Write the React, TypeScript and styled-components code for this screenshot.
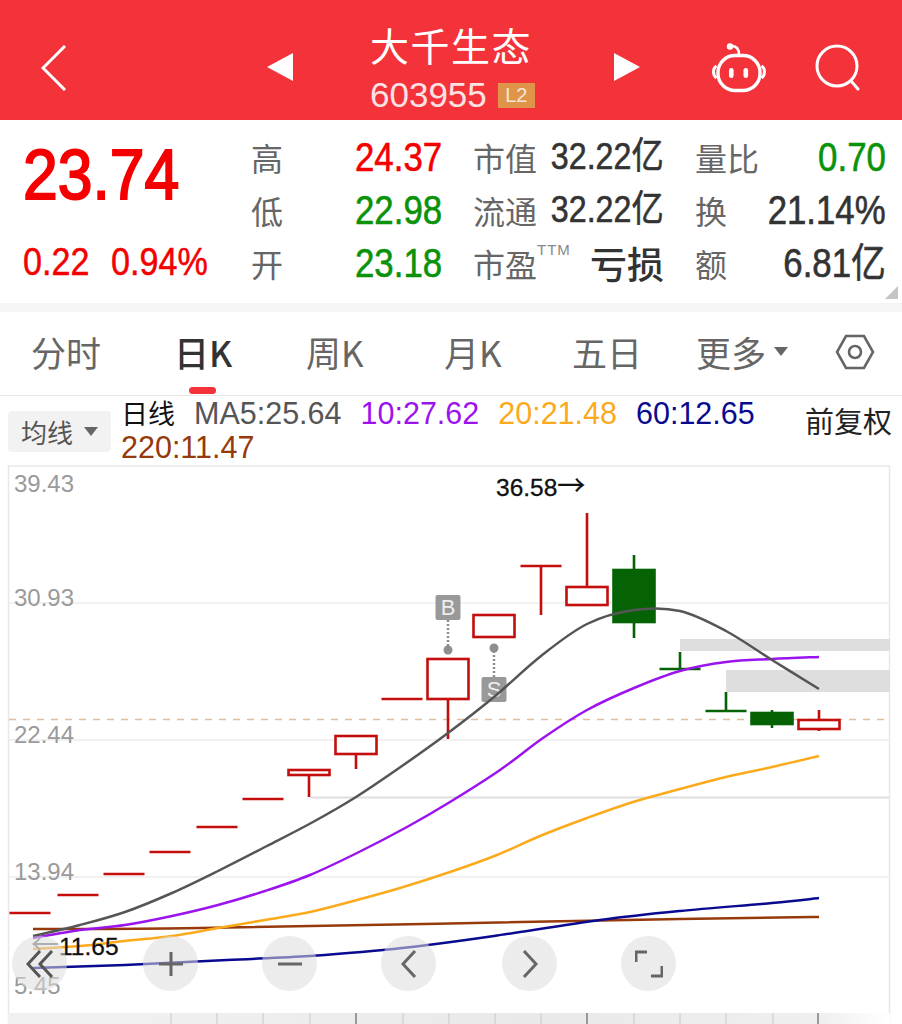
import React from "react";
import styled, { createGlobalStyle } from "styled-components";

const Global = createGlobalStyle`
  html, body { margin: 0; padding: 0; background: #fff; }
  body { width: 902px; height: 1024px; overflow: hidden; font-family: "Liberation Sans", "Noto Sans CJK SC", sans-serif; }
  * { box-sizing: border-box; }
`;
const Page = styled.div`width: 902px; height: 1024px; display: flex; flex-direction: column; overflow: hidden;`;

const Header = styled.header`
  height: 120px; background: #f3323a; color: #fff; flex: none;
  display: grid; grid-template-columns: 267px 26px 321px 26px 72px 54px 49px 48px 39px; align-items: center;
`;
const BackCell = styled.div`padding-left: 41px; display: flex; padding-top: 16px;`;
const Arrow = styled.div`display: flex; padding-top: 14px;`;
const TitleBlock = styled.div`display: flex; flex-direction: column; padding: 14px 0 0 77px;`;
const Title = styled.div`font: 400 39px/50px "Noto Sans CJK SC", sans-serif; letter-spacing: 1.5px; white-space: nowrap;`;
const CodeRow = styled.div`display: flex; align-items: center; gap: 11px; height: 40px; margin-top: 6px;`;
const Code = styled.span`font: 400 35px/40px "Liberation Sans", sans-serif; color: #fbe3e4;`;
const Badge = styled.span`width: 37px; height: 25px; background: #e0944a; color: #f6e6d4; font: 400 20px/25px "Liberation Sans", sans-serif; text-align: center;`;
const IconCell = styled.div`display: flex; justify-content: center; padding-top: 16px;`;

const Quote = styled.section`height: 183px; flex: none; position: relative; display: grid; grid-template-columns: 252px 1fr;`;
const PriceBlock = styled.div`padding: 20px 0 0 23px; display: flex; flex-direction: column; align-items: flex-start;`;
const BigPrice = styled.div`font: 400 71px/70px "Liberation Sans", sans-serif; color: #f40000; -webkit-text-stroke: 2px #f40000; transform: scaleX(.88); transform-origin: left center;`;
const ChangeRow = styled.div`display: flex; gap: 12px; margin-top: 32px; font: 400 39px/40px "Liberation Sans", sans-serif; color: #f40000; -webkit-text-stroke: .5px #f40000;`;
const Change = styled.span`display: inline-block; transform: scaleX(.875); transform-origin: left center;`;
const Stats = styled.div`display: grid; grid-template-columns: 190px 190px 190px; column-gap: 32px; grid-auto-rows: 53px; padding-top: 10px;`;
const Stat = styled.div`display: flex; justify-content: space-between; align-items: center; white-space: nowrap;`;
const Label = styled.span`font: 400 32px/40px "Noto Sans CJK SC", sans-serif; color: #666; position: relative; margin-left: -1px;`;
const Sup = styled.sup`position: absolute; left: 64px; top: -2px; font: 400 15px/18px "Liberation Sans", sans-serif; color: #888; letter-spacing: 1px;`;
const Value = styled.span<{ $c: string; $small?: boolean }>`
  display: inline-block; margin-left: -60px; transform: scaleX(.87); transform-origin: right center;
  font: 400 ${p => (p.$small ? "37px" : "40px")}/40px "Liberation Sans", "Noto Sans CJK SC", sans-serif;
  color: ${p => p.$c}; -webkit-text-stroke: .6px ${p => p.$c};
`;
const Loss = styled.span`font: 500 37px/40px "Noto Sans CJK SC", sans-serif; color: #333;`;
const Corner = styled.div`
  position: absolute; right: 4px; bottom: 4px; width: 0; height: 0;
  border-left: 13px solid transparent; border-bottom: 13px solid #c4c4c4;
`;
const Band = styled.div`height: 9px; background: #f5f5f5; flex: none;`;

const Tabs = styled.nav`height: 84px; flex: none; border-bottom: 1px solid #e8e8e8; display: grid; grid-template-columns: 143px 132px 138px 128px 124px 139px 1fr; padding-left: 31px; align-items: center; position: relative;`;
const Tab = styled.div<{ $active?: boolean }>`
  font: ${p => (p.$active ? 500 : 400)} 35px/44px "Noto Sans CJK SC", "Liberation Sans", sans-serif; color: ${p => (p.$active ? "#333" : "#666")};
  display: flex; align-items: center; gap: 8px; padding-bottom: 4px; white-space: nowrap; position: relative;
`;
const Underline = styled.span`position: absolute; left: 15px; top: 57px; width: 27px; height: 7px; border-radius: 4px; background: #f3323a;`;
const Caret = styled.span`width: 0; height: 0; border-left: 7.5px solid transparent; border-right: 7.5px solid transparent; border-top: 9px solid #666;`;
const HexWrap = styled.div`display: flex; padding-bottom: 4px;`;

const Legend = styled.div`height: 69px; flex: none; display: grid; grid-template-columns: 113px 1fr auto; padding: 0 10px 0 8px; align-items: start;`;
const MaSelect = styled.div`margin-top: 15px; width: 103px; height: 41px; background: #f2f2f2; border-radius: 4px; display: flex; align-items: center; padding-left: 13px; gap: 11px; font: 400 26px/41px "Noto Sans CJK SC", sans-serif; color: #555;`;
const MaCaret = styled.span`width: 0; height: 0; border-left: 7px solid transparent; border-right: 7px solid transparent; border-top: 9px solid #666;`;
const MaList = styled.div`display: flex; flex-wrap: wrap; column-gap: 19px; width: 650px;`;
const MaItem = styled.span<{ $c: string }>`font: 400 30.5px/34px "Liberation Sans", "Noto Sans CJK SC", sans-serif; color: ${p => p.$c}; white-space: nowrap;`;
const DayLabel = styled.span`font: 400 27px/34px "Noto Sans CJK SC", sans-serif; color: #111; white-space: nowrap;`;
const Adjust = styled.div`font: 400 29px/34px "Noto Sans CJK SC", sans-serif; color: #222; padding-top: 7px;`;

const Chart = styled.section`position: relative; flex: 1; min-height: 0;`;
const ChartSvg = styled.svg`display: block; width: 902px; height: 559px;`;
const Controls = styled.div`position: absolute; left: 12px; top: 471px; display: flex;`;
const Round = styled.div<{ $after: number }>`width: 55px; height: 55px; margin-right: ${p => p.$after}px; border-radius: 50%; background: rgba(221,221,221,.55); display: flex; align-items: center; justify-content: center;`;

const Robot = () => (
  <svg width="54" height="50" viewBox="0 0 54 50" fill="none" stroke="#fff" strokeWidth="3.4">
    <path d="M20 3 C25.500 3 27 7 27 12" strokeWidth="2.6" />
    <circle cx="18" cy="3.500" r="3.200" fill="#fff" stroke="none" />
    <rect x="6" y="12.500" width="42" height="35" rx="17" />
    <path d="M4.500 23 C0.500 25 0.500 32 4.500 35 M49.500 23 C53.500 25 53.500 32 49.500 35" strokeWidth="3" />
    <rect x="17" y="25" width="4.600" height="10" rx="2.300" fill="#fff" stroke="none" />
    <rect x="31.500" y="25" width="4.600" height="10" rx="2.300" fill="#fff" stroke="none" />
  </svg>
);
const Search = () => (
  <svg width="48" height="50" viewBox="0 0 48 50" fill="none" stroke="#fff" strokeWidth="3">
    <circle cx="22" cy="23" r="20" />
    <path d="M36 38 L43 46" strokeLinecap="round" />
  </svg>
);

const red = "#c40d0d", green = "#056305";
type C = [number, number, number, number, number, boolean];
// centre x, body top, body bottom, wick top, wick bottom, rising
const candles: C[] = [
  [30, 913, 913, 913, 913, true], [78, 895, 895, 895, 895, true], [124, 874, 874, 874, 874, true],
  [170, 852, 852, 852, 852, true], [217, 827, 827, 827, 827, true], [263, 799, 799, 799, 799, true],
  [309, 770, 775, 770, 797, true], [356, 736, 754, 736, 769, true], [402, 699, 699, 699, 699, true],
  [448, 659, 699, 659, 739, true], [494, 615, 637, 615, 637, true], [541, 566, 566, 566, 615, true],
  [587, 587, 605, 513, 606, true], [634, 570, 622, 555, 638, false], [680, 669, 669, 652, 669, false],
  [726, 711, 711, 692, 711, false], [772, 713, 724, 710, 728, false], [819, 720, 729, 710, 731, true],
];
type P = [number, number];
const ma5: P[] = [[33,936],[80,925],[125,912],[172,893],[218,871],[267,846],[313,822],[356,797],[402,766],[448,733],[494,697],[541,656],[587,624],[634,610],[680,611],[726,631],[772,660],[819,689]];
const ma10: P[] = [[33,938],[80,930],[125,925],[172,916],[218,905],[265,891],[310,875],[357,853],[407,827],[450,802],[500,770],[543,738],[587,710],[634,688],[680,671],[726,662],[772,659],[819,657]];
const ma20: P[] = [[33,949],[80,946],[125,941],[172,936],[218,928],[265,920],[310,912],[357,900],[400,888],[450,872],[497,855],[540,836],[587,818],[633,802],[680,789],[726,777],[772,767],[819,756]];
const ma60: P[] = [[33,968],[125,965],[227,960],[310,956],[383,950],[428,945],[494,936],[600,920],[680,911],[772,903],[819,898]];
const ma220: P[] = [[33,929],[200,928],[680,919],[819,917]];
const ticks = [171, 217, 263, 310, 356, 403, 449, 495, 541, 587, 634, 680, 726, 773, 818];

// Catmull-Rom through the points, so the moving averages read as smooth curves.
const smooth = (p: P[]) => {
  let d = `M${p[0][0]} ${p[0][1]}`;
  for (let i = 0; i < p.length - 1; i++) {
    const a = p[Math.max(i - 1, 0)], b = p[i], c = p[i + 1], e = p[Math.min(i + 2, p.length - 1)];
    d += ` C${b[0] + (c[0] - a[0]) / 6} ${b[1] + (c[1] - a[1]) / 6} ${c[0] - (e[0] - b[0]) / 6} ${c[1] - (e[1] - b[1]) / 6} ${c[0]} ${c[1]}`;
  }
  return d;
};

const Candle = ({ c }: { c: C }) => {
  const [x, t, b, wt, wb, up] = c;
  const col = up ? red : green;
  const w = 41;
  return (
    <g>
      <line x1={x} x2={x} y1={wt} y2={wb} stroke={col} strokeWidth="2.600" />
      {t === b ? (
        <line x1={x - w / 2} x2={x + w / 2} y1={t} y2={t} stroke={col} strokeWidth="2.600" />
      ) : (
        <rect x={x - w / 2} y={t} width={w} height={b - t} stroke={col} strokeWidth="2.600" fill={up ? "#fff" : green} />
      )}
    </g>
  );
};

const Marker = ({ x, y, tipY, dotY, label }: { x: number; y: number; tipY: number; dotY: number; label: string }) => (
  <g>
    <line x1={x} x2={x} y1={tipY} y2={dotY} stroke="#8e8e8e" strokeWidth="2.500" strokeDasharray="2 2" />
    <circle cx={x} cy={dotY} r="4.500" fill="#8e8e8e" />
    <rect x={x - 12.5} y={y} width="25" height="25" rx="2" fill="#999" />
    <text x={x} y={y + 20} textAnchor="middle" fontFamily="Liberation Sans" fontSize="22" fill="#eee">{label}</text>
  </g>
);

const Axis = ({ y, children }: { y: number; children: string }) => (
  <text x="14" y={y} fontFamily="Liberation Sans" fontSize="24" fill="#9a9a9a">{children}</text>
);

const Curve = ({ pts, color }: { pts: P[]; color: string }) => (
  <path d={smooth(pts)} fill="none" stroke={color} strokeWidth="2.500" />
);

export default function App() {
  return (
    <Page>
      <Global />
      <Header>
        <BackCell>
          <svg width="26" height="46" viewBox="0 0 26 46" fill="none" stroke="#fff" strokeWidth="3"><path d="M24 1 L2 23 L24 45" /></svg>
        </BackCell>
        <Arrow><svg width="26" height="28" viewBox="0 0 26 28"><path d="M26 0 V28 L0 14 Z" fill="#fff" /></svg></Arrow>
        <TitleBlock>
          <Title>大千生态</Title>
          <CodeRow><Code>603955</Code><Badge>L2</Badge></CodeRow>
        </TitleBlock>
        <Arrow><svg width="26" height="28" viewBox="0 0 26 28"><path d="M0 0 V28 L26 14 Z" fill="#fff" /></svg></Arrow>
        <div />
        <IconCell><Robot /></IconCell>
        <div />
        <IconCell><Search /></IconCell>
        <div />
      </Header>

      <Quote>
        <PriceBlock>
          <BigPrice>23.74</BigPrice>
          <ChangeRow><Change>0.22</Change><Change>0.94%</Change></ChangeRow>
        </PriceBlock>
        <Stats>
          <Stat><Label>高</Label><Value $c="#f40000">24.37</Value></Stat>
          <Stat><Label>市值</Label><Value $c="#333" $small>32.22亿</Value></Stat>
          <Stat><Label>量比</Label><Value $c="#0a920a">0.70</Value></Stat>
          <Stat><Label>低</Label><Value $c="#0a920a">22.98</Value></Stat>
          <Stat><Label>流通</Label><Value $c="#333" $small>32.22亿</Value></Stat>
          <Stat><Label>换</Label><Value $c="#333">21.14%</Value></Stat>
          <Stat><Label>开</Label><Value $c="#0a920a">23.18</Value></Stat>
          <Stat><Label>市盈<Sup>TTM</Sup></Label><Loss>亏损</Loss></Stat>
          <Stat><Label>额</Label><Value $c="#333">6.81亿</Value></Stat>
        </Stats>
        <Corner />
      </Quote>
      <Band />

      <Tabs>
        <Tab>分时</Tab>
        <Tab $active>日K<Underline /></Tab>
        <Tab>周K</Tab>
        <Tab>月K</Tab>
        <Tab>五日</Tab>
        <Tab>更多<Caret /></Tab>
        <HexWrap>
          <svg width="40" height="36" viewBox="0 0 40 36" fill="none" stroke="#666" strokeWidth="2.600">
            <path d="M11 2 H29 L38 18 L29 34 H11 L2 18 Z" />
            <circle cx="20" cy="18" r="6" />
          </svg>
        </HexWrap>
      </Tabs>

      <Legend>
        <MaSelect>均线<MaCaret /></MaSelect>
        <MaList>
          <DayLabel>日线</DayLabel>
          <MaItem $c="#555">MA5:25.64</MaItem>
          <MaItem $c="#9b14ee">10:27.62</MaItem>
          <MaItem $c="#fbaa1c">20:21.48</MaItem>
          <MaItem $c="#0a0a90">60:12.65</MaItem>
          <MaItem $c="#96390b">220:11.47</MaItem>
        </MaList>
        <Adjust>前复权</Adjust>
      </Legend>

      <Chart>
        <ChartSvg viewBox="0 465 902 559">
          <defs>
            <linearGradient id="axisBand" x1="0" x2="1" y1="0" y2="0">
              <stop offset="0" stopColor="#f0f0f0" />
              <stop offset=".15" stopColor="#f0f0f0" />
              <stop offset=".6" stopColor="#e9e9e9" />
              <stop offset=".92" stopColor="#efefef" />
              <stop offset="1" stopColor="#ffffff" />
            </linearGradient>
          </defs>
          <rect x="8.500" y="466" width="881" height="560" fill="none" stroke="#e8e8e8" strokeWidth="1.500" />
          {[603, 740, 877].map(y => <line key={y} x1="9" x2="889" y1={y} y2={y} stroke="#ececec" strokeWidth="1.500" />)}
          <line x1="310" x2="889" y1="797.500" y2="797.500" stroke="#dedede" strokeWidth="2" />
          <rect x="680" y="639" width="210" height="12" fill="#dedede" />
          <rect x="726" y="670" width="164" height="22" fill="#dedede" />
          <line x1="9" x2="889" y1="719.500" y2="719.500" stroke="#d9b48a" strokeWidth="1.500" strokeDasharray="7 7" opacity=".85" />
          <Axis y={492}>39.43</Axis>
          <Axis y={606}>30.93</Axis>
          <Axis y={743}>22.44</Axis>
          <Axis y={880}>13.94</Axis>
          <Axis y={994}>5.45</Axis>
          {candles.map(c => <Candle key={c[0]} c={c} />)}
          <Marker x={448} y={595} tipY={620} dotY={650} label="B" />
          <Marker x={494} y={677} tipY={677} dotY={648} label="S" />
          <Curve pts={ma220} color="#96390b" />
          <Curve pts={ma60} color="#0a0a90" />
          <Curve pts={ma20} color="#fbaa1c" />
          <Curve pts={ma10} color="#9b14ee" />
          <Curve pts={ma5} color="#555" />
          <text x="496" y="496" fontFamily="Liberation Sans" fontSize="24.500" fill="#111" stroke="#111" strokeWidth=".3">36.58<tspan fontFamily="Noto Sans CJK SC" fontSize="28">→</tspan></text>
          <text x="31" y="955" fontFamily="Liberation Sans" fontSize="24.500" fill="#111" stroke="#111" strokeWidth=".3"><tspan fontFamily="Noto Sans CJK SC" fontSize="28" fill="#777" stroke="none">←</tspan>11.65</text>
          <rect x="8" y="1013" width="882" height="11" fill="url(#axisBand)" />
          {ticks.map((x, i) => (
            <line key={x} x1={x} x2={x} y1="1013" y2="1024" stroke={(i - 4) % 5 === 0 ? "#999" : "#c8c8c8"} strokeWidth={(i - 4) % 5 === 0 ? 2 : 1} />
          ))}
        </ChartSvg>
        <Controls>
          <Round $after={76}>
            <svg width="28" height="30" viewBox="0 0 28 30" fill="none" stroke="#555" strokeWidth="3"><path d="M14 2 L2 15 L14 28 M26 2 L14 15 L26 28" /></svg>
          </Round>
          <Round $after={64}>
            <svg width="26" height="26" viewBox="0 0 26 26" fill="none" stroke="#666" strokeWidth="3"><path d="M13 1 V25 M1 13 H25" /></svg>
          </Round>
          <Round $after={64}>
            <svg width="26" height="26" viewBox="0 0 26 26" fill="none" stroke="#666" strokeWidth="3"><path d="M1 13 H25" /></svg>
          </Round>
          <Round $after={66}>
            <svg width="16" height="30" viewBox="0 0 16 30" fill="none" stroke="#666" strokeWidth="3"><path d="M14 2 L2 15 L14 28" /></svg>
          </Round>
          <Round $after={64}>
            <svg width="16" height="30" viewBox="0 0 16 30" fill="none" stroke="#666" strokeWidth="3"><path d="M2 2 L14 15 L2 28" /></svg>
          </Round>
          <Round $after={0}>
            <svg width="28" height="28" viewBox="0 0 28 28" fill="none" stroke="#666" strokeWidth="3"><path d="M1 12 V2 H12 M27 16 V26 H16" /></svg>
          </Round>
        </Controls>
      </Chart>
    </Page>
  );
}
